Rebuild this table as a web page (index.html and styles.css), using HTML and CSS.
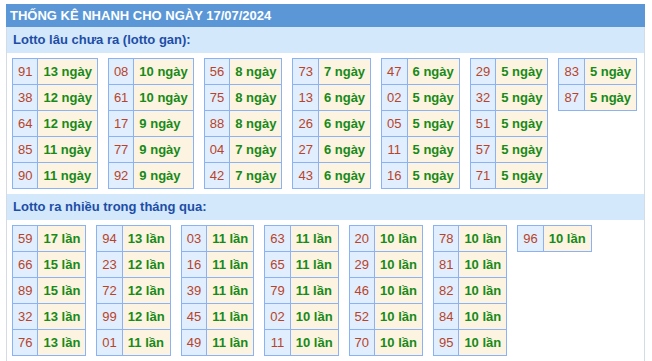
FILE: index.html
```html
<!DOCTYPE html>
<html lang="vi">
<head>
<meta charset="utf-8">
<title>Thống kê nhanh</title>
<link rel="stylesheet" href="styles.css">
</head>
<body>
<div class="box">
  <div class="title">THỐNG KÊ NHANH CHO NGÀY 17/07/2024</div>
  <div class="inner">
    <div class="sub">Lotto lâu chưa ra (lotto gan):</div>
    <div class="tables">
      <table class="lt"><tr><td class="n">91</td><td class="c">13 ngày</td></tr><tr><td class="n">38</td><td class="c">12 ngày</td></tr><tr><td class="n">64</td><td class="c">12 ngày</td></tr><tr><td class="n">85</td><td class="c">11 ngày</td></tr><tr><td class="n">90</td><td class="c">11 ngày</td></tr></table>
      <table class="lt"><tr><td class="n">08</td><td class="c">10 ngày</td></tr><tr><td class="n">61</td><td class="c">10 ngày</td></tr><tr><td class="n">17</td><td class="c">9 ngày</td></tr><tr><td class="n">77</td><td class="c">9 ngày</td></tr><tr><td class="n">92</td><td class="c">9 ngày</td></tr></table>
      <table class="lt"><tr><td class="n">56</td><td class="c">8 ngày</td></tr><tr><td class="n">75</td><td class="c">8 ngày</td></tr><tr><td class="n">88</td><td class="c">8 ngày</td></tr><tr><td class="n">04</td><td class="c">7 ngày</td></tr><tr><td class="n">42</td><td class="c">7 ngày</td></tr></table>
      <table class="lt"><tr><td class="n">73</td><td class="c">7 ngày</td></tr><tr><td class="n">13</td><td class="c">6 ngày</td></tr><tr><td class="n">26</td><td class="c">6 ngày</td></tr><tr><td class="n">27</td><td class="c">6 ngày</td></tr><tr><td class="n">43</td><td class="c">6 ngày</td></tr></table>
      <table class="lt"><tr><td class="n">47</td><td class="c">6 ngày</td></tr><tr><td class="n">02</td><td class="c">5 ngày</td></tr><tr><td class="n">05</td><td class="c">5 ngày</td></tr><tr><td class="n">11</td><td class="c">5 ngày</td></tr><tr><td class="n">16</td><td class="c">5 ngày</td></tr></table>
      <table class="lt"><tr><td class="n">29</td><td class="c">5 ngày</td></tr><tr><td class="n">32</td><td class="c">5 ngày</td></tr><tr><td class="n">51</td><td class="c">5 ngày</td></tr><tr><td class="n">57</td><td class="c">5 ngày</td></tr><tr><td class="n">71</td><td class="c">5 ngày</td></tr></table>
      <table class="lt"><tr><td class="n">83</td><td class="c">5 ngày</td></tr><tr><td class="n">87</td><td class="c">5 ngày</td></tr></table>
    </div>
    <div class="sub">Lotto ra nhiều trong tháng qua:</div>
    <div class="tables">
      <table class="lt"><tr><td class="n">59</td><td class="c">17 lần</td></tr><tr><td class="n">66</td><td class="c">15 lần</td></tr><tr><td class="n">89</td><td class="c">15 lần</td></tr><tr><td class="n">32</td><td class="c">13 lần</td></tr><tr><td class="n">76</td><td class="c">13 lần</td></tr></table>
      <table class="lt"><tr><td class="n">94</td><td class="c">13 lần</td></tr><tr><td class="n">23</td><td class="c">12 lần</td></tr><tr><td class="n">72</td><td class="c">12 lần</td></tr><tr><td class="n">99</td><td class="c">12 lần</td></tr><tr><td class="n">01</td><td class="c">11 lần</td></tr></table>
      <table class="lt"><tr><td class="n">03</td><td class="c">11 lần</td></tr><tr><td class="n">16</td><td class="c">11 lần</td></tr><tr><td class="n">39</td><td class="c">11 lần</td></tr><tr><td class="n">45</td><td class="c">11 lần</td></tr><tr><td class="n">49</td><td class="c">11 lần</td></tr></table>
      <table class="lt"><tr><td class="n">63</td><td class="c">11 lần</td></tr><tr><td class="n">65</td><td class="c">11 lần</td></tr><tr><td class="n">79</td><td class="c">11 lần</td></tr><tr><td class="n">02</td><td class="c">10 lần</td></tr><tr><td class="n">11</td><td class="c">10 lần</td></tr></table>
      <table class="lt"><tr><td class="n">20</td><td class="c">10 lần</td></tr><tr><td class="n">29</td><td class="c">10 lần</td></tr><tr><td class="n">46</td><td class="c">10 lần</td></tr><tr><td class="n">52</td><td class="c">10 lần</td></tr><tr><td class="n">70</td><td class="c">10 lần</td></tr></table>
      <table class="lt"><tr><td class="n">78</td><td class="c">10 lần</td></tr><tr><td class="n">81</td><td class="c">10 lần</td></tr><tr><td class="n">82</td><td class="c">10 lần</td></tr><tr><td class="n">84</td><td class="c">10 lần</td></tr><tr><td class="n">95</td><td class="c">10 lần</td></tr></table>
      <table class="lt"><tr><td class="n">96</td><td class="c">10 lần</td></tr></table>
    </div>
  </div>
</div>
</body>
</html>
```
FILE: styles.css
```css
html, body {
  margin: 0;
  padding: 0;
  background: #ffffff;
}
body {
  font-family: "Liberation Sans", Arial, sans-serif;
  font-size: 13px;
}
.box {
  margin: 4px 0 0 6px;
  width: 639px;
}
.title {
  background: #5b97d6;
  color: #ffffff;
  font-weight: bold;
  font-size: 13px;
  height: 23px;
  line-height: 24px;
  padding-left: 4px;
}
.inner {
  border-left: 1px solid #d3dbe4;
  border-right: 1px solid #d3dbe4;
  padding-bottom: 12px;
}
.sub {
  background: #d4e8fc;
  color: #1d4ea6;
  font-weight: bold;
  font-size: 13px;
  height: 26px;
  line-height: 26px;
  padding-left: 6px;
}
.tables {
  display: flex;
  flex-wrap: wrap;
  align-items: flex-start;
  gap: 10px;
  padding: 5px 0 5px 5px;
}
.lt {
  border-collapse: collapse;
}
.lt td {
  border: 1px solid #8bb2f5;
  height: 25px;
  line-height: 25px;
  padding: 0 5px;
  white-space: nowrap;
  font-size: 13px;
}
.lt td.n {
  background: #e1eefd;
  color: #b8432a;
  text-align: center;
}
.lt td.c {
  background: #fdf3e1;
  color: #178a17;
  font-weight: bold;
}
```
